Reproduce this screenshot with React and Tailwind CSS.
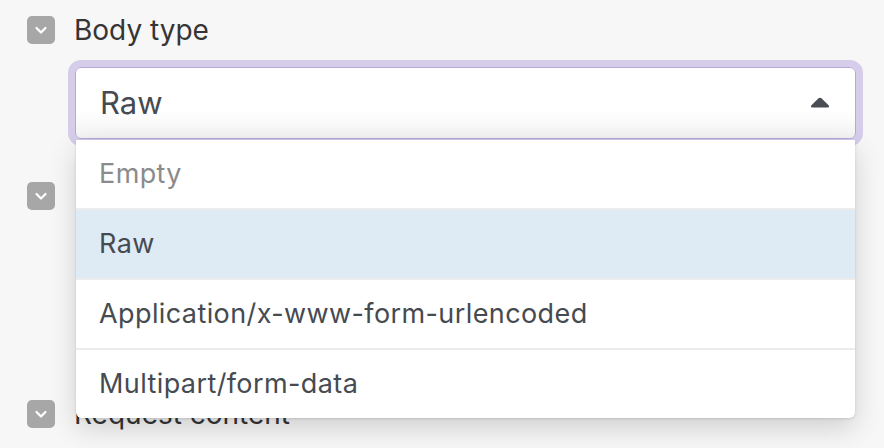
import React from "react";

const Chevron = () => (
  <div className="w-[28px] h-[28px] shrink-0 rounded-[5px] bg-[#a7a7a7] flex items-center justify-center">
    <svg width="14" height="14" viewBox="0 0 14 14" fill="none">
      <path d="M2.5 5 L7 9.5 L11.5 5" stroke="#fff" strokeWidth="2.2" strokeLinecap="round" strokeLinejoin="round" />
    </svg>
  </div>
);

const options = ["Empty", "Raw", "Application/x-www-form-urlencoded", "Multipart/form-data"];

export default function App() {
  return (
    <div
      className="w-[884px] h-[448px] overflow-hidden bg-[#f7f7f7] relative"
      style={{ fontFamily: "Inter, 'Noto Sans', sans-serif" }}
    >
      <div className="pl-[27px] pt-[16px] pr-[28px] flex flex-col">
        {/* Body type */}
        <div className="flex items-center gap-[19px] h-[28px]">
          <Chevron />
          <span className="text-[28px] text-[#353535] leading-none">Body type</span>
        </div>
        <div className="ml-[48px] mt-[23px] relative">
          <div className="h-[72px] rounded-[6px] border border-[#b7a8da] shadow-[0_0_0_7px_#d6cdea] bg-gradient-to-b from-white from-60% to-[#f3f3f3] flex items-center justify-between pl-[24px] pr-[24px]">
            <span className="text-[31px] text-[#464a51]">Raw</span>
            <svg width="22" height="12" viewBox="0 0 22 12">
              <path d="M9.3 1.6 Q11 0 12.7 1.6 L19.5 8.3 Q21 10.5 18.5 10.5 L3.5 10.5 Q1 10.5 2.5 8.3 Z" fill="#4a4d53" />
            </svg>
          </div>
          <div className="absolute z-10 left-[1px] right-[1px] top-[73px] bg-white rounded-b-[6px] shadow-[0_10px_28px_rgba(0,0,0,0.16),0_1px_3px_rgba(0,0,0,0.12)]">
            {options.map((o, i) => (
              <div
                key={o}
                className={
                  "h-[68px] flex items-center pl-[23px] text-[27px] tracking-[0.4px] " +
                  (i > 0 ? "border-t-2 border-[#ececec] h-[70px] " : "") +
                  (o === "Raw" ? "bg-[#deebf4] text-[#464a51]" : o === "Empty" ? "text-[#8b8b8b]" : "text-[#464a51]")
                }
              >
                {o}
              </div>
            ))}
          </div>
        </div>

        {/* second section, its label sits under the open menu */}
        <div className="flex items-center h-[28px] mt-[43px]">
          <Chevron />
        </div>
        <div className="h-[147px] mt-[43px]" />

        {/* Request content */}
        <div className="flex items-center gap-[19px] h-[28px]">
          <Chevron />
          <span className="text-[28px] text-[#353535] leading-none">Request content</span>
        </div>
      </div>
    </div>
  );
}
